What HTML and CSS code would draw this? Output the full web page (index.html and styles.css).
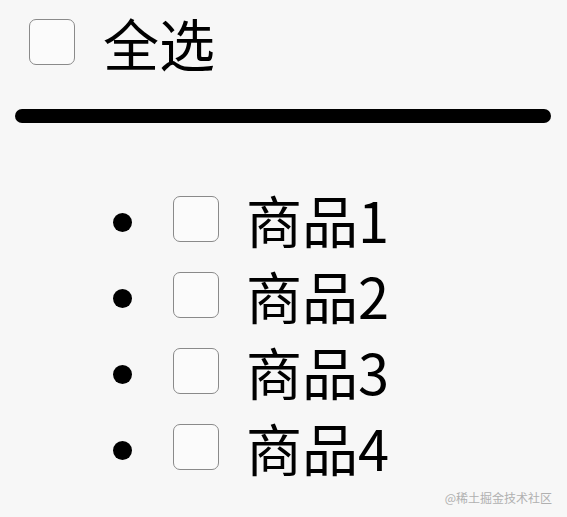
FILE: index.html
```html
<!DOCTYPE html>
<html lang="zh-CN">
<head>
    <meta charset="UTF-8">
    <meta name="viewport" content="width=device-width, initial-scale=1">
    <title>全选</title>
    <link rel="stylesheet" href="styles.css">
</head>
<body>

<div class="select-all">
    <input type="checkbox" id="checkAll" class="box">
    <label for="checkAll">全选</label>
</div>
<hr class="divider">

<ul class="goods">
    <li><input type="checkbox" class="box item"><span>商品1</span></li>
    <li><input type="checkbox" class="box item"><span>商品2</span></li>
    <li><input type="checkbox" class="box item"><span>商品3</span></li>
    <li><input type="checkbox" class="box item"><span>商品4</span></li>
</ul>

<p class="mark">@稀土掘金技术社区</p>

<script>
// 全选 / 取消全选
const checkAll = document.getElementById("checkAll");
const items = document.querySelectorAll(".item");

checkAll.onchange = function() {
  items.forEach(function(box) {
    box.checked = checkAll.checked;
  });
};

items.forEach(function(box) {
  box.onchange = function() {
    checkAll.checked = Array.from(items).every(function(b) { return b.checked; });
  };
});
</script>

</body>
</html>
```

FILE: styles.css
```css
body {
    font-family: "Microsoft YaHei", "Noto Sans CJK SC", sans-serif;
    background-color: #f7f7f7;
    color: #000;
    margin: 0;
    padding: 0;
    height: 517px;
    position: relative;
    overflow: hidden;
}

.box {
    appearance: none;
    -webkit-appearance: none;
    width: 46px;
    height: 46px;
    margin: 0;
    border: 1px solid #8a8a8a;
    border-radius: 7px;
    background-color: #fbfbfb;
    box-sizing: border-box;
    flex-shrink: 0;
}

.box:checked {
    background-color: #0a64d8;
    border-color: #0a64d8;
}

.select-all {
    display: flex;
    align-items: center;
    height: 46px;
    padding: 19px 0 0 29px;
    font-size: 56px;
    line-height: 1;
}

.select-all label {
    margin-left: 28px;
}

.divider {
    height: 14px;
    margin: 44px 16px 0 15px;
    border: none;
    border-radius: 7px;
    background-color: #000;
}

.goods {
    list-style: none;
    margin: 58px 0 0;
    padding: 0 0 0 113px;
    font-size: 56px;
    line-height: 1;
}

.goods li {
    display: flex;
    align-items: center;
    height: 76px;
}

/* 列表圆点 */
.goods li::before {
    content: "";
    width: 19px;
    height: 19px;
    margin: 6px 41px 0 0;
    border-radius: 50%;
    background-color: #000;
    flex-shrink: 0;
}

.goods li span {
    margin-left: 27px;
}

.mark {
    position: absolute;
    right: 15px;
    bottom: 11px;
    margin: 0;
    font-size: 12px;
    color: #b0b0b0;
}
```
